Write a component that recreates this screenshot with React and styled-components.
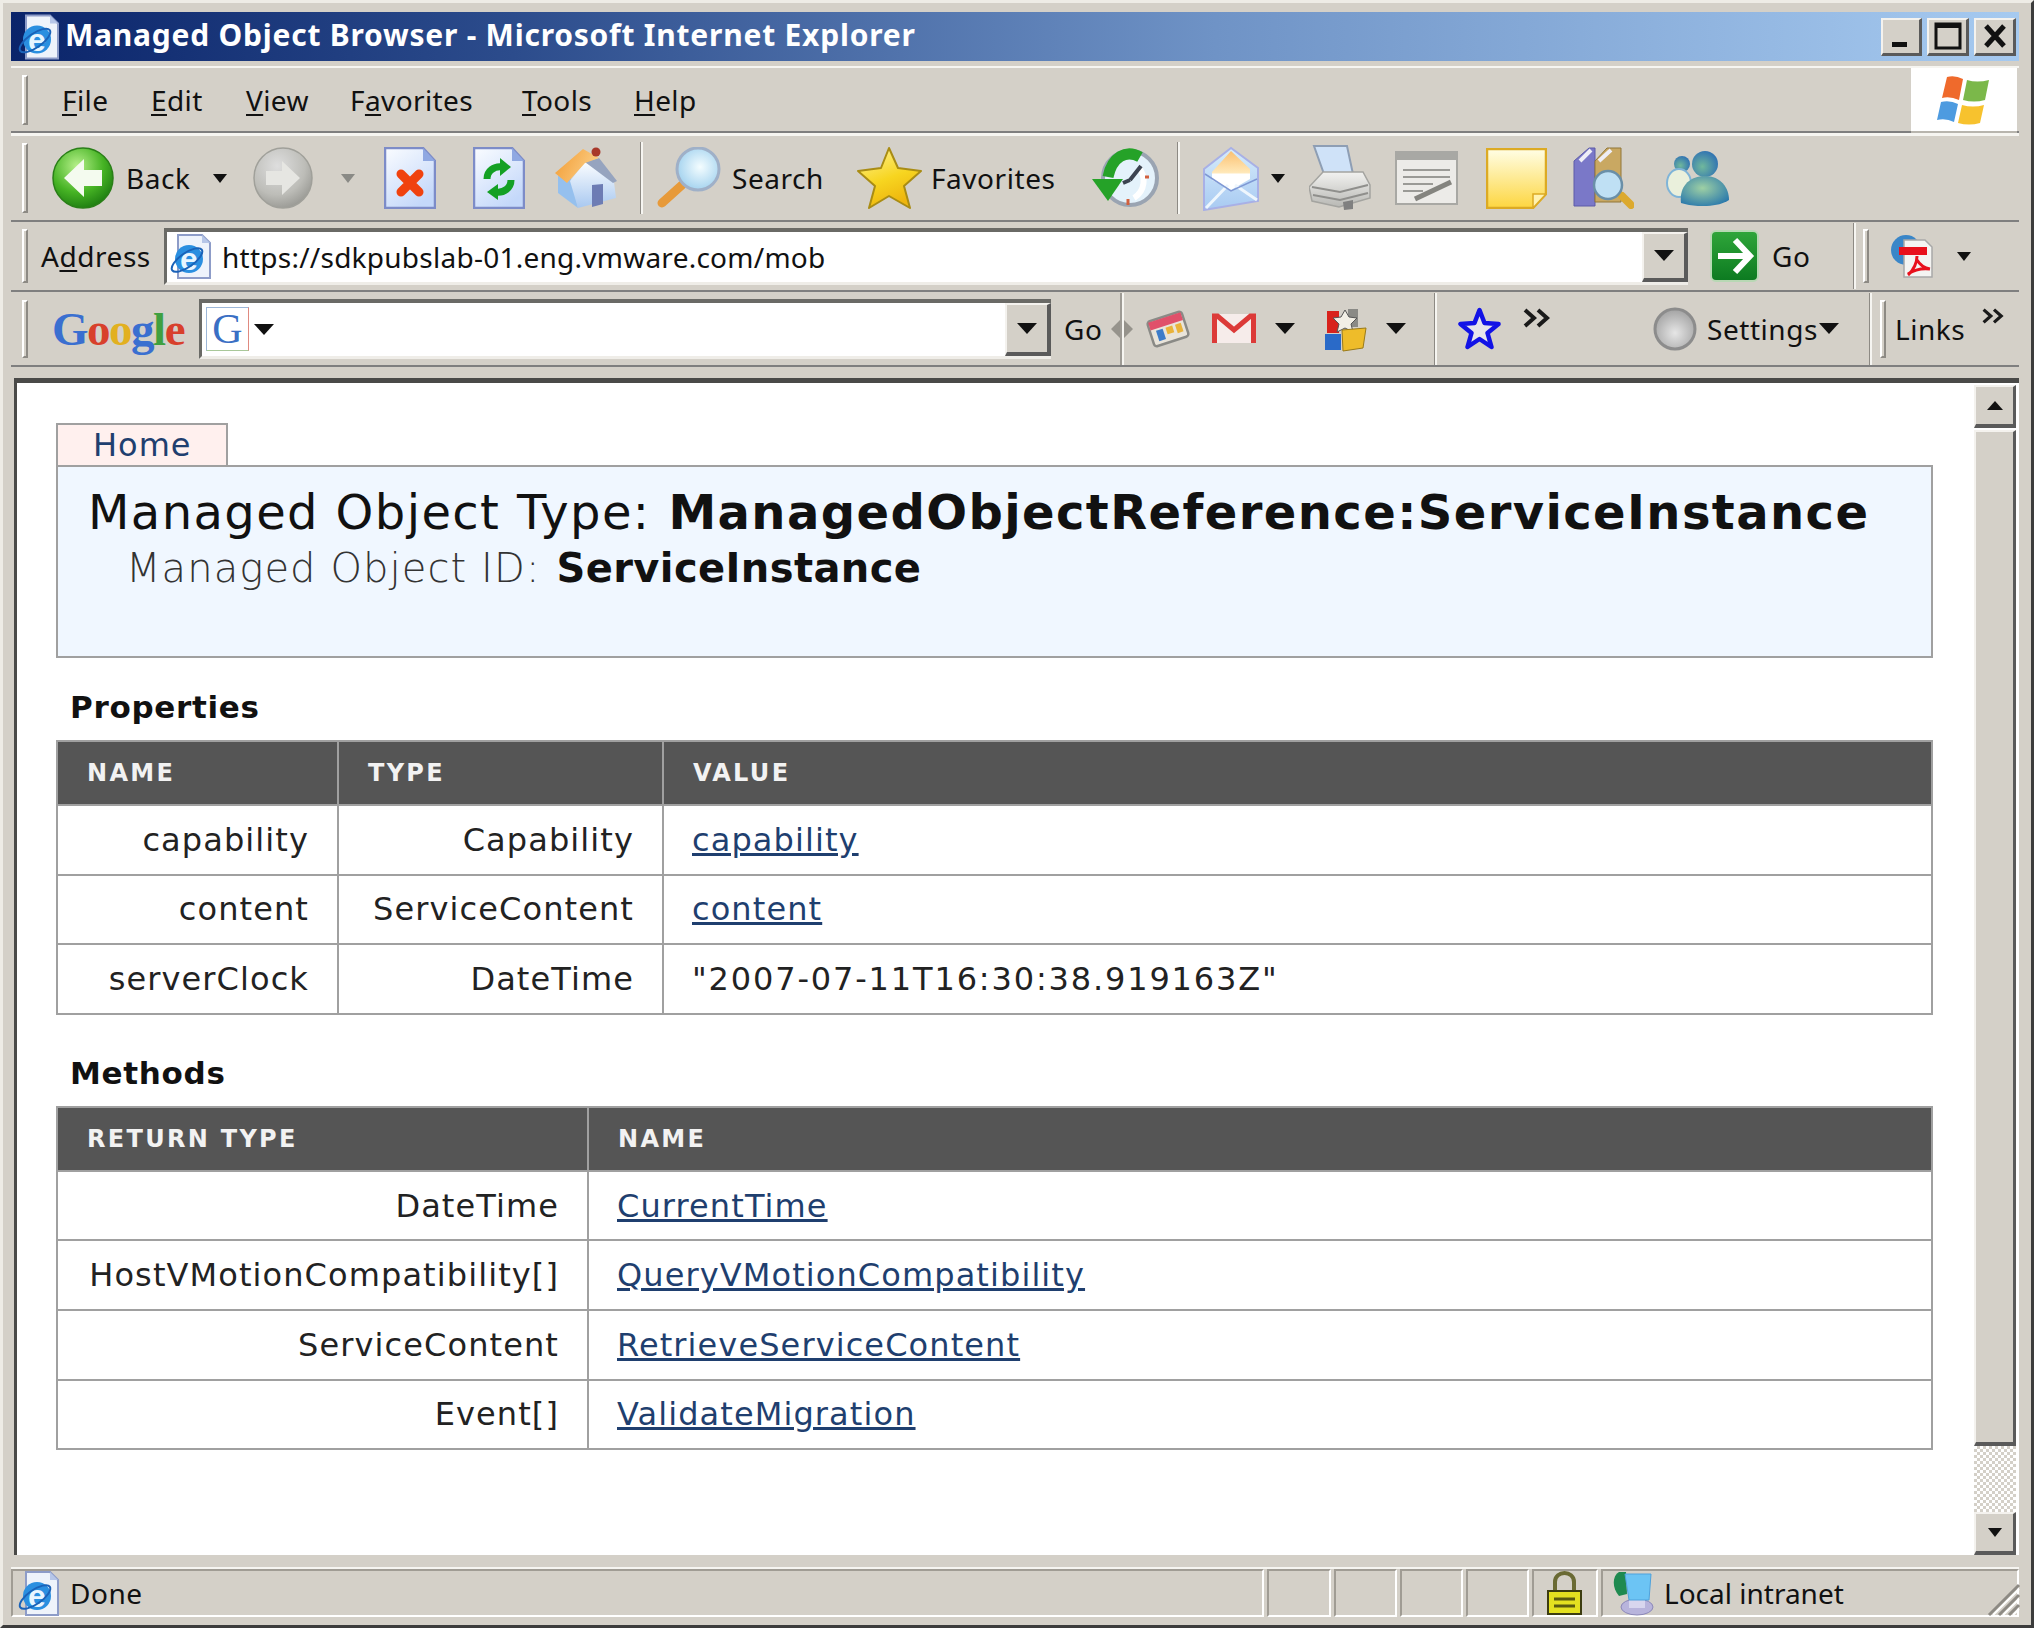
import styled, { createGlobalStyle } from "styled-components";

const GlobalStyle = createGlobalStyle`
  html, body {
    margin: 0;
    padding: 0;
    background: #d4d0c8;
  }
`;

const chromeFont = `"Noto Sans", "Open Sans", sans-serif`;
const pageFont = `"DejaVu Sans", Verdana, sans-serif`;

const Window = styled.div`
  box-sizing: border-box;
  width: 2034px;
  height: 1628px;
  display: flex;
  flex-direction: column;
  position: relative;
  overflow: hidden;
  background: #d4d0c8;
  border-style: solid;
  border-width: 3px;
  border-color: #eeece6 #3c3c3c #3c3c3c #eeece6;
  padding: 9px 12px 6px 8px;
  font-family: ${chromeFont};
  color: #111;
`;
const TitleBar = styled.div`
  flex: none;
  height: 49px;
  display: flex;
  align-items: center;
  padding: 0 3px 0 6px;
  background: linear-gradient(90deg, #0a246a 0%, #2c4c8c 25%, #6f93c6 60%, #a6caf0 100%);
`;
const TitleText = styled.div`
  flex: 1;
  margin: 0 0 4px 5px;
  color: #fff;
  font-size: 30px;
  font-weight: 700;
  letter-spacing: 0.77px;
  white-space: nowrap;
`;
const WinButtons = styled.div`
  display: flex;
  gap: 5px;
`;
const WinButton = styled.div`
  box-sizing: border-box;
  width: ${(p) => p.$w || 42}px;
  height: 38px;
  background: #d4d0c8;
  border-style: solid;
  border-width: 2px 3px 3px 2px;
  border-color: #f4f2ee #5a5a5a #5a5a5a #f4f2ee;
  display: flex;
  align-items: center;
  justify-content: center;
`;
const Bar = styled.div`
  box-sizing: border-box;
  flex: none;
  height: ${(p) => p.$h}px;
  margin-top: ${(p) => p.$mt || 0}px;
  display: flex;
  align-items: center;
  padding-left: 11px;
  border-top: ${(p) => p.$top || 0}px solid #f6f5f1;
  border-bottom: 2px solid #7f7f7f;
`;
const Handle = styled.div`
  box-sizing: border-box;
  flex: none;
  width: 6px;
  height: ${(p) => p.$h || 50}px;
  margin-left: ${(p) => p.$ml || 0}px;
  background: #d4d0c8;
  border-style: solid;
  border-width: 2px;
  border-color: #fff #8d8a84 #8d8a84 #fff;
`;
const Sep = styled.div`
  box-sizing: border-box;
  flex: none;
  width: 3px;
  height: ${(p) => p.$h || 72}px;
  margin-left: ${(p) => p.$ml || 0}px;
  border-left: 1px solid #8d8a84;
  border-right: 2px solid #f6f5f1;
`;
const MenuItem = styled.div`
  flex: none;
  width: ${(p) => p.$w}px;
  margin-left: ${(p) => p.$ml}px;
  font-size: 28px;
  letter-spacing: 0.4px;
  white-space: nowrap;
  u {
    text-underline-offset: 3px;
  }
`;
const LogoBox = styled.div`
  align-self: stretch;
  margin-left: auto;
  margin-right: 2px;
  width: 106px;
  background: #fff;
  border-bottom: 2px solid #b8b5ae;
  margin-bottom: -2px;
  display: flex;
  align-items: center;
  justify-content: center;
`;
const Label = styled.div`
  flex: none;
  width: ${(p) => p.$w}px;
  margin-left: ${(p) => p.$ml || 0}px;
  font-size: 28px;
  letter-spacing: 0.55px;
  white-space: nowrap;
  u {
    text-underline-offset: 3px;
  }
`;
const Caret = styled.div`
  flex: none;
  width: 0;
  height: 0;
  margin-left: ${(p) => p.$ml || 0}px;
  border-style: solid;
  border-width: ${(p) => (p.$big ? "11px 10px 0 10px" : "9px 7px 0 7px")};
  border-color: ${(p) => p.$color || "#111"} transparent transparent transparent;
`;
const Ico = styled.svg`
  flex: none;
  display: block;
  margin-left: ${(p) => p.$ml || 0}px;
  margin-bottom: ${(p) => p.$mb || 0}px;
`;
const Field = styled.div`
  box-sizing: border-box;
  flex: none;
  width: ${(p) => p.$w}px;
  height: ${(p) => p.$h}px;
  margin-left: ${(p) => p.$ml}px;
  display: flex;
  align-items: center;
  background: #fff;
  border-style: solid;
  border-width: 4px 0 3px 3px;
  border-color: #6a6a66 #fff #efede8 #6a6a66;
`;
const FieldText = styled.div`
  flex: 1;
  margin-left: 10px;
  font-size: 28px;
  letter-spacing: 0.25px;
  white-space: nowrap;
`;
const DropButton = styled.div`
  box-sizing: border-box;
  flex: none;
  width: 46px;
  align-self: stretch;
  margin-left: auto;
  background: #d4d0c8;
  border-style: solid;
  border-width: 2px 4px 4px 2px;
  border-color: #f4f2ee #5a5a5a #5a5a5a #f4f2ee;
  display: flex;
  align-items: center;
  justify-content: center;
`;
const GoogleLogo = styled.div`
  flex: none;
  width: 134px;
  margin-left: 24px;
  font-family: "Liberation Serif", serif;
  font-size: 47px;
  font-weight: 700;
  letter-spacing: -1.5px;
  white-space: nowrap;
`;
const Letter = styled.span`
  color: ${(p) => p.$c};
`;
const GBox = styled.div`
  box-sizing: border-box;
  flex: none;
  width: 43px;
  height: 44px;
  margin-left: 4px;
  display: flex;
  align-items: center;
  justify-content: center;
  background: #fff;
  border: 1px solid #9db7d8;
  border-right-color: #e08a80;
  border-bottom-color: #a9c89a;
  font-family: "Liberation Serif", serif;
  font-size: 42px;
  color: #3a6fc4;
`;
const Content = styled.div`
  box-sizing: border-box;
  flex: none;
  height: 1177px;
  margin: 11px 0 0 3px;
  display: flex;
  background: #fff;
  border-top: 5px solid #4a4a48;
  border-left: 3px solid #4a4a48;
`;
const Page = styled.div`
  box-sizing: border-box;
  width: 1955px;
  flex: none;
  padding: 40px 39px 0;
  font-family: ${pageFont};
`;
const Tab = styled.div`
  box-sizing: border-box;
  width: 172px;
  height: 42px;
  padding-left: 35px;
  display: flex;
  align-items: center;
  background: #fff0ee;
  border: 2px solid #a0a0a0;
  border-bottom: none;
  color: #1f3f6f;
  font-size: 32px;
  letter-spacing: 1px;
  line-height: 1;
`;
const HeaderBox = styled.div`
  box-sizing: border-box;
  height: 193px;
  padding: 17px 0 0 30px;
  background: #f0f7ff;
  border: 2px solid #a0a0a0;
`;
const TypeLine = styled.div`
  font-size: 48px;
  letter-spacing: 1.4px;
  line-height: 56px;
  white-space: nowrap;
  color: #111;
  b {
    margin-left: 18px;
  }
`;
const IdLine = styled.div`
  margin-left: 38px;
  font-size: 40px;
  letter-spacing: 1.1px;
  line-height: 56px;
  white-space: nowrap;
  color: #333;
  font-weight: 300;
  b {
    margin-left: 16px;
    color: #111;
    font-weight: 700;
    letter-spacing: 0.4px;
  }
`;
const SectionTitle = styled.h2`
  margin: ${(p) => p.$mt}px 0 10px 14px;
  height: 45px;
  font-size: 31px;
  letter-spacing: 0.7px;
  line-height: 45px;
  font-weight: 700;
  color: #111;
`;
const Grid = styled.table`
  width: 100%;
  table-layout: fixed;
  border-collapse: collapse;
  border: 2px solid #a0a0a0;
`;
const HeadCell = styled.th`
  height: 62px;
  padding: 0 0 0 29px;
  background: #555;
  border: 2px solid #a0a0a0;
  color: #f2f2f2;
  font-size: 24px;
  font-weight: 700;
  letter-spacing: 2.3px;
  text-align: left;
`;
const Cell = styled.td`
  box-sizing: border-box;
  height: 69.6px;
  padding: ${(p) => (p.$right ? "0 28px 0 0" : "0 0 0 28px")};
  border: 2px solid #a0a0a0;
  font-size: 32px;
  letter-spacing: 1.1px;
  color: #222;
  text-align: ${(p) => (p.$right ? "right" : "left")};
  white-space: nowrap;
`;
const Stamp = styled.span`
  letter-spacing: 1.85px;
`;
const Link = styled.a`
  color: #1f3f6f;
  text-decoration: underline;
`;
const ScrollBar = styled.div`
  flex: 1;
  display: flex;
  flex-direction: column;
  padding: 2px 3px 0 2px;
`;
const ScrollButton = styled.div`
  box-sizing: border-box;
  flex: none;
  height: ${(p) => p.$h}px;
  margin-top: ${(p) => p.$mt || 0}px;
  background: #d4d0c8;
  border-style: solid;
  border-width: 2px 3px 4px 2px;
  border-color: #f4f2ee #5a5a5a #5a5a5a #f4f2ee;
  display: flex;
  align-items: center;
  justify-content: center;
`;
const ScrollTrack = styled.div`
  flex: 1;
  background: repeating-conic-gradient(#d4d0c8 0 25%, #fff 0 50%) 0 0 / 6px 6px;
`;
const UpCaret = styled.div`
  width: 0;
  height: 0;
  border-style: solid;
  border-width: 0 8px 9px 8px;
  border-color: transparent transparent #111 transparent;
`;
const StatusBar = styled.div`
  flex: none;
  margin-top: 12px;
  height: 50px;
  display: flex;
  gap: 3px;
  border-top: 2px solid #f6f5f1;
`;
const StatusCell = styled.div`
  box-sizing: border-box;
  flex: ${(p) => (p.$w ? "none" : 1)};
  width: ${(p) => p.$w}px;
  height: 48px;
  display: flex;
  align-items: center;
  gap: ${(p) => p.$gap || 0}px;
  border-style: solid;
  border-width: 2px;
  border-color: #a09c94 #fff #fff #a09c94;
  font-size: 28px;
  white-space: nowrap;
`;
const Grip = styled.svg`
  position: absolute;
  right: 10px;
  bottom: 8px;
`;

const BackIcon = (p) => (
  <Ico width="62" height="62" viewBox="0 0 62 62" {...p}>
    <defs>
      <radialGradient id="bk" cx="0.4" cy="0.3" r="0.8">
        <stop offset="0" stopColor="#b6f08a" />
        <stop offset="0.55" stopColor="#46b324" />
        <stop offset="1" stopColor="#14700c" />
      </radialGradient>
    </defs>
    <circle cx="31" cy="31" r="30" fill="url(#bk)" stroke="#2a7f18" strokeWidth="1.5" />
    <path d="M32 12L12 31l20 19V39h18V23H32z" fill="#f4fbef" />
  </Ico>
);
const ForwardIcon = (p) => (
  <Ico width="60" height="62" viewBox="0 0 60 62" {...p}>
    <defs>
      <radialGradient id="fw" cx="0.4" cy="0.3" r="0.8">
        <stop offset="0" stopColor="#dedede" />
        <stop offset="0.6" stopColor="#bdbdb8" />
        <stop offset="1" stopColor="#8f8f8a" />
      </radialGradient>
    </defs>
    <ellipse cx="30" cy="31" rx="29" ry="30" fill="url(#fw)" stroke="#a0a09a" strokeWidth="1.5" />
    <path d="M29 14l18 17-18 17V38H13V24h16z" fill="#e6e6e2" />
  </Ico>
);
const PageShape = ({ id }) => (
  <>
    <defs>
      <linearGradient id={id} x1="0" y1="0" x2="0.6" y2="1">
        <stop offset="0" stopColor="#fafcff" />
        <stop offset="1" stopColor="#c4d8fa" />
      </linearGradient>
    </defs>
    <path d="M1 1h38l12 13v47H1z" fill={`url(#${id})`} stroke="#7d8cc8" strokeWidth="2.500" />
    <path d="M39 1v13h12z" fill="#8fa8e2" />
  </>
);
const StopIcon = (p) => (
  <Ico width="52" height="62" viewBox="0 0 52 62" {...p}>
    <PageShape id="stp" />
    <path d="M17 27l18 18M35 27L17 45" stroke="#f0420f" strokeWidth="9" strokeLinecap="round" />
  </Ico>
);
const RefreshIcon = (p) => (
  <Ico width="52" height="62" viewBox="0 0 52 62" {...p}>
    <PageShape id="rfr" />
    <path d="M14 32c0-8 7-13 15-12" fill="none" stroke="#14a024" strokeWidth="7" />
    <path d="M27 11l11 9-11 9z" fill="#14a024" />
    <path d="M38 33c0 8-7 13-15 12" fill="none" stroke="#14a024" strokeWidth="7" />
    <path d="M25 53l-11-8 11-8z" fill="#14a024" />
  </Ico>
);
const HomeIcon = (p) => (
  <Ico width="63" height="64" viewBox="0 0 63 64" {...p}>
    <defs>
      <linearGradient id="hw" x1="0" y1="0" x2="0" y2="1">
        <stop offset="0" stopColor="#fbfdff" />
        <stop offset="1" stopColor="#a8c8f0" />
      </linearGradient>
      <linearGradient id="hr" x1="0" y1="0" x2="1" y2="0.4">
        <stop offset="0" stopColor="#f29a30" />
        <stop offset="1" stopColor="#fbcd84" />
      </linearGradient>
    </defs>
    <path d="M3 30l13 2 7 30L3 47z" fill="#95c0ee" />
    <path d="M15 35l15-19 29 20 2 16-38 10z" fill="url(#hw)" />
    <path d="M44 12l18 23-4 2-28-21z" fill="#96a4bf" />
    <path d="M0 27L28 3l16 9-14 5-18 20z" fill="url(#hr)" />
    <circle cx="41" cy="6" r="4.500" fill="#a8382a" />
    <path d="M37 39l11-1v20l-11 3z" fill="#6d7cb4" />
  </Ico>
);
const SearchIcon = (p) => (
  <Ico width="66" height="62" viewBox="0 0 66 62" {...p}>
    <defs>
      <radialGradient id="lens" cx="0.55" cy="0.45" r="0.6">
        <stop offset="0" stopColor="#f4fdff" />
        <stop offset="1" stopColor="#9fd0ee" />
      </radialGradient>
    </defs>
    <path d="M27 38L7 56" stroke="#e79a3a" strokeWidth="9" strokeLinecap="round" />
    <ellipse cx="43" cy="22" rx="21" ry="21" fill="url(#lens)" stroke="#9fb0c8" strokeWidth="3" />
  </Ico>
);
const StarIcon = (p) => (
  <Ico width="67" height="64" viewBox="0 0 67 64" {...p}>
    <defs>
      <linearGradient id="st" x1="0" y1="0" x2="0.4" y2="1">
        <stop offset="0" stopColor="#fff39a" />
        <stop offset="0.6" stopColor="#f7d520" />
        <stop offset="1" stopColor="#eeb60e" />
      </linearGradient>
    </defs>
    <path d="M33 2l9 20 23 3-17 15 6 22-21-12-20 12 6-22L2 25l23-3z" fill="url(#st)" stroke="#a98c14" strokeWidth="2" strokeLinejoin="round" />
  </Ico>
);
const HistoryIcon = (p) => (
  <Ico width="67" height="62" viewBox="0 0 67 62" {...p}>
    <circle cx="38" cy="31" r="27" fill="#e4f2fb" stroke="#9aa4b2" strokeWidth="4" />
    <path d="M46 20a20 20 0 0 1-4 31" fill="none" stroke="#fff" strokeWidth="6" />
    <path d="M38 33l11-14M38 33l-7 3" stroke="#3b4350" strokeWidth="4" />
    <path d="M36 52v6M57 30h-4" stroke="#d2603e" strokeWidth="3" />
    <path d="M48 10C34 2 20 10 16 30" fill="none" stroke="#25a228" strokeWidth="11" />
    <path d="M0 32h31L16 54z" fill="#25a228" />
  </Ico>
);
const MailIcon = (p) => (
  <Ico width="56" height="65" viewBox="0 0 56 65" {...p}>
    <defs>
      <linearGradient id="mb" x1="0" y1="0" x2="0" y2="1">
        <stop offset="0" stopColor="#d6ecfb" />
        <stop offset="1" stopColor="#a8caf2" />
      </linearGradient>
      <linearGradient id="ml" x1="0" y1="0" x2="0" y2="1">
        <stop offset="0" stopColor="#fbc070" />
        <stop offset="0.55" stopColor="#ffe8b8" />
        <stop offset="0.6" stopColor="#fff" />
      </linearGradient>
    </defs>
    <path d="M1 23L28 2l27 20v33L1 64z" fill="url(#mb)" stroke="#a8b0e6" strokeWidth="2" />
    <path d="M9 26L28 5l19 18v10L28 44 9 34z" fill="url(#ml)" />
    <path d="M3 62l22-23M54 54L32 39" fill="none" stroke="#eef6fd" strokeWidth="3" />
    <path d="M2 28l26 17 26-12" fill="none" stroke="#7f98d4" strokeWidth="1.500" />
  </Ico>
);
const PrinterIcon = (p) => (
  <Ico width="62" height="66" viewBox="0 0 62 66" {...p}>
    <defs>
      <linearGradient id="pr" x1="0" y1="0" x2="0" y2="1">
        <stop offset="0" stopColor="#f2f2f0" />
        <stop offset="1" stopColor="#b8b8b4" />
      </linearGradient>
    </defs>
    <path d="M5 1h33l6 28H15z" fill="#cfe2f8" stroke="#8e9eb4" strokeWidth="2" />
    <path d="M0 42l14-15h40l7 13v13L30 62 3 56z" fill="url(#pr)" stroke="#a4a4a0" strokeWidth="1.500" />
    <path d="M3 42l28 5 28-7M4 50l27 5 28-7" fill="none" stroke="#8f8f8c" strokeWidth="2" />
    <path d="M34 57l10-2v9l-9 1z" fill="#808080" />
  </Ico>
);
const EditIcon = (p) => (
  <Ico width="63" height="54" viewBox="0 0 63 54" {...p}>
    <rect x="1" y="1" width="61" height="52" fill="#ecebe8" stroke="#a8a8a4" strokeWidth="2" />
    <rect x="1" y="1" width="61" height="8" fill="#a8a8a4" />
    <path d="M8 19h47M8 26h47M8 33h30M8 40h20" stroke="#9a9a96" strokeWidth="2" />
    <path d="M20 48l36-17" stroke="#84847f" strokeWidth="5" />
  </Ico>
);
const NoteIcon = (p) => (
  <Ico width="61" height="61" viewBox="0 0 61 61" {...p}>
    <defs>
      <linearGradient id="nt" x1="0" y1="0" x2="0" y2="1">
        <stop offset="0" stopColor="#fffee6" />
        <stop offset="1" stopColor="#fdd640" />
      </linearGradient>
    </defs>
    <path d="M1 1h59v45L47 60H1z" fill="url(#nt)" stroke="#dcaa24" strokeWidth="2.500" />
    <path d="M60 46H47v14z" fill="#fff2b0" stroke="#dcaa24" strokeWidth="1.500" />
  </Ico>
);
const ResearchIcon = (p) => (
  <Ico width="61" height="62" viewBox="0 0 61 62" {...p}>
    <path d="M1 14L16 1h6v58H1z" fill="#7a78c8" stroke="#5c5aa8" />
    <path d="M22 14L34 1h14v54H22z" fill="#c9a862" stroke="#917738" />
    <path d="M7 14L18 3M26 14L38 3" stroke="#eeeef6" strokeWidth="4" />
    <path d="M49 49l9 9" stroke="#dca92e" strokeWidth="8" strokeLinecap="round" />
    <circle cx="35" cy="38" r="14" fill="#bfe0f4" stroke="#6a8fa8" strokeWidth="2.500" />
  </Ico>
);
const MessengerIcon = (p) => (
  <Ico width="65" height="56" viewBox="0 0 65 56" {...p}>
    <defs>
      <radialGradient id="ms" cx="0.45" cy="0.4" r="0.7">
        <stop offset="0" stopColor="#9ed0a4" />
        <stop offset="1" stopColor="#2474ac" />
      </radialGradient>
      <radialGradient id="mh" cx="0.4" cy="0.6" r="0.7">
        <stop offset="0" stopColor="#70b89c" />
        <stop offset="1" stopColor="#2a6cb4" />
      </radialGradient>
    </defs>
    <circle cx="18" cy="14" r="8" fill="url(#mh)" />
    <ellipse cx="15" cy="33" rx="12" ry="14" fill="#eaf0dc" stroke="#7fb4d8" strokeWidth="2" />
    <circle cx="41" cy="14" r="13" fill="url(#mh)" />
    <path d="M17 53c-2-16 8-27 24-27s24 12 24 24c-10 7-33 8-48 3z" fill="url(#ms)" />
  </Ico>
);
const WindowsLogo = () => (
  <Ico width="54" height="50" viewBox="0 0 54 50">
    <path d="M10 2q8-2 16 2l-4 21q-9-4-17-2z" fill="#ef6a2c" />
    <path d="M30 5q10 3 22 0l-4 20q-11 3-22 0z" fill="#7bb84a" />
    <path d="M4 27q9-2 17 2l-4 18q-8-4-17-2z" fill="#4d9be0" />
    <path d="M25 30q11 3 22 0l-4 18q-11 3-22 0z" fill="#f7c22e" />
  </Ico>
);
const IEPage = ({ w = 43, h = 45, ...p }) => (
  <Ico width={w} height={h} viewBox="0 0 43 45" {...p}>
    <path d="M9 1h24l8 8v35H9z" fill="#eef3fb" stroke="#8d9cc8" strokeWidth="2" />
    <path d="M33 1v8h8z" fill="#b6c6e8" />
    <circle cx="20" cy="25" r="14" fill="#2a8fe0" />
    <text x="20" y="36" textAnchor="middle" fontFamily="Liberation Sans, sans-serif" fontWeight="700" fontSize="32" fill="#e8f6ff">e</text>
    <ellipse cx="18" cy="26" rx="18" ry="7" transform="rotate(-35 18 26)" fill="none" stroke="#1a62b8" strokeWidth="2" />
  </Ico>
);
const GoIcon = (p) => (
  <Ico width="49" height="52" viewBox="0 0 49 52" {...p}>
    <defs>
      <linearGradient id="go" x1="0" y1="0" x2="0" y2="1">
        <stop offset="0" stopColor="#2fa63a" />
        <stop offset="1" stopColor="#0c7a20" />
      </linearGradient>
    </defs>
    <rect x="1" y="1" width="47" height="50" rx="5" fill="url(#go)" stroke="#b8d8b4" strokeWidth="2" />
    <path d="M25 10l15 16-15 16M8 26h30" fill="none" stroke="#fff" strokeWidth="6" />
  </Ico>
);
const PdfIcon = (p) => (
  <Ico width="43" height="44" viewBox="0 0 43 44" {...p}>
    <circle cx="16" cy="16" r="15" fill="#3a86c8" />
    <path d="M14 6h21l7 7v30H14z" fill="#f4f4f2" stroke="#a8a8a8" strokeWidth="1.500" />
    <rect x="9" y="13" width="28" height="8" fill="#e8101c" />
    <path d="M18 41c6-5 9-13 9-19M27 26c3 5 7 8 13 9M18 40c6-4 14-6 22-5" fill="none" stroke="#e8101c" strokeWidth="3" />
  </Ico>
);
const GrabSep = (p) => (
  <Ico width="24" height="72" viewBox="0 0 24 72" {...p}>
    <path d="M1 36l9-9v18zM23 36l-9-9v18z" fill="#96938c" />
    <path d="M11 0v72" stroke="#8d8a84" strokeWidth="1.500" />
    <path d="M13 0v72" stroke="#f6f5f1" strokeWidth="2" />
  </Ico>
);
const CalendarIcon = (p) => (
  <Ico width="44" height="42" viewBox="0 0 44 42" {...p}>
    <g transform="rotate(-18 22 21)">
      <rect x="4" y="8" width="36" height="26" rx="3" fill="#e9e4da" stroke="#8a8a86" strokeWidth="2.500" />
      <rect x="5" y="9" width="34" height="8" fill="#e0506a" />
      <rect x="10" y="19" width="7" height="11" fill="#3d7cc9" />
      <rect x="20" y="19" width="7" height="7" fill="#eab33a" />
      <rect x="30" y="19" width="6" height="9" fill="#eab33a" />
    </g>
  </Ico>
);
const GmailIcon = (p) => (
  <Ico width="46" height="31" viewBox="0 0 46 31" {...p}>
    <rect x="1" y="1" width="44" height="29" fill="#f6ecea" />
    <path d="M3.500 30V3h3l16.500 14L39.500 3h3v27" fill="none" stroke="#dc3a38" strokeWidth="5" />
  </Ico>
);
const BoxIcon = (p) => (
  <Ico width="43" height="46" viewBox="0 0 43 46" {...p}>
    <rect x="3" y="5" width="12" height="22" fill="#d8221c" />
    <rect x="24" y="3" width="10" height="18" fill="#8a8a86" />
    <path d="M21 4l4 7 8 1-6 6 2 8-8-4-8 4 2-8-6-6 8-1z" fill="#f2efe6" stroke="#555" />
    <rect x="1" y="28" width="16" height="16" fill="#2a6ac8" />
    <path d="M18 24l24-2-3 20-20 3z" fill="#eebc2a" stroke="#9a7a18" />
  </Ico>
);
const BlueStar = (p) => (
  <Ico width="43" height="43" viewBox="0 0 43 43" {...p}>
    <path d="M21.500 3l5 13 14 1-11 9 4 14-12-8-12 8 4-14-11-9 14-1z" fill="#e6e4ea" stroke="#1212e6" strokeWidth="4.500" strokeLinejoin="round" />
  </Ico>
);
const Chevrons = ({ w = 30, h = 20, ...p }) => (
  <Ico width={w} height={h} viewBox="0 0 30 20" {...p}>
    <path d="M2 2l9 8-9 8M15 2l9 8-9 8" fill="none" stroke="#1a1a1a" strokeWidth="4" />
  </Ico>
);
const SettingsBall = (p) => (
  <Ico width="44" height="44" viewBox="0 0 44 44" {...p}>
    <defs>
      <radialGradient id="ball" cx="0.5" cy="0.6" r="0.55">
        <stop offset="0" stopColor="#e6e6e6" />
        <stop offset="1" stopColor="#a8a8a8" />
      </radialGradient>
    </defs>
    <circle cx="22" cy="22" r="20" fill="url(#ball)" stroke="#8c8c8c" strokeWidth="3" />
  </Ico>
);
const LockIcon = (p) => (
  <Ico width="37" height="44" viewBox="0 0 37 44" {...p}>
    <path d="M9 22V11c0-12 19-12 19 0v11" fill="none" stroke="#6a6a34" strokeWidth="4" />
    <rect x="2" y="20" width="33" height="23" fill="#e4e020" stroke="#3c3c10" strokeWidth="2" />
    <path d="M8 28h21M8 35h21" stroke="#5a5a10" strokeWidth="3" />
  </Ico>
);
const ZoneIcon = (p) => (
  <Ico width="46" height="46" viewBox="0 0 46 46" {...p}>
    <ellipse cx="26" cy="37" rx="16" ry="8" fill="#b8b4dc" stroke="#8c88b8" />
    <rect x="18" y="24" width="16" height="14" fill="#d8d6ee" />
    <path d="M8 2C1 6 1 18 8 26l8-2-1-22z" fill="#1f8a50" />
    <path d="M14 4h26l-2 26H18z" fill="#6cc4f4" stroke="#4fa2dc" />
  </Ico>
);

const Home = () => (
  <Page>
    <Tab>Home</Tab>
    <HeaderBox>
      <TypeLine>
        Managed Object Type:<b>ManagedObjectReference:ServiceInstance</b>
      </TypeLine>
      <IdLine>
        Managed Object ID:<b>ServiceInstance</b>
      </IdLine>
    </HeaderBox>
    <SectionTitle $mt={27}>Properties</SectionTitle>
    <Grid>
      <colgroup>
        <col style={{ width: 281 }} />
        <col style={{ width: 325 }} />
        <col />
      </colgroup>
      <thead>
        <tr>
          <HeadCell>NAME</HeadCell>
          <HeadCell>TYPE</HeadCell>
          <HeadCell>VALUE</HeadCell>
        </tr>
      </thead>
      <tbody>
        <tr>
          <Cell $right>capability</Cell>
          <Cell $right>Capability</Cell>
          <Cell><Link>capability</Link></Cell>
        </tr>
        <tr>
          <Cell $right>content</Cell>
          <Cell $right>ServiceContent</Cell>
          <Cell><Link>content</Link></Cell>
        </tr>
        <tr>
          <Cell $right>serverClock</Cell>
          <Cell $right>DateTime</Cell>
          <Cell><Stamp>"2007-07-11T16:30:38.919163Z"</Stamp></Cell>
        </tr>
      </tbody>
    </Grid>
    <SectionTitle $mt={36}>Methods</SectionTitle>
    <Grid>
      <colgroup>
        <col style={{ width: 531 }} />
        <col />
      </colgroup>
      <thead>
        <tr>
          <HeadCell>RETURN TYPE</HeadCell>
          <HeadCell>NAME</HeadCell>
        </tr>
      </thead>
      <tbody>
        <tr>
          <Cell $right>DateTime</Cell>
          <Cell><Link>CurrentTime</Link></Cell>
        </tr>
        <tr>
          <Cell $right>HostVMotionCompatibility[]</Cell>
          <Cell><Link>QueryVMotionCompatibility</Link></Cell>
        </tr>
        <tr>
          <Cell $right>ServiceContent</Cell>
          <Cell><Link>RetrieveServiceContent</Link></Cell>
        </tr>
        <tr>
          <Cell $right>Event[]</Cell>
          <Cell><Link>ValidateMigration</Link></Cell>
        </tr>
      </tbody>
    </Grid>
  </Page>
);

export default function App() {
  return (
    <Window>
      <GlobalStyle />
      <TitleBar>
        <IEPage w={43} h={46} />
        <TitleText>Managed Object Browser - Microsoft Internet Explorer</TitleText>
        <WinButtons>
          <WinButton $w={41}>
            <Ico width="26" height="26" viewBox="0 0 26 26">
              <rect x="4" y="19" width="15" height="5" fill="#111" />
            </Ico>
          </WinButton>
          <WinButton>
            <Ico width="28" height="28" viewBox="0 0 28 28">
              <path d="M2 2h24v24H2z" fill="none" stroke="#111" strokeWidth="3" />
              <path d="M2 4h24" stroke="#111" strokeWidth="4" />
            </Ico>
          </WinButton>
          <WinButton>
            <Ico width="26" height="26" viewBox="0 0 26 26">
              <path d="M4 3l18 20M22 3L4 23" stroke="#111" strokeWidth="5" />
            </Ico>
          </WinButton>
        </WinButtons>
      </TitleBar>

      <Bar $h={67} $mt={5} $top={2}>
        <Handle />
        <MenuItem $ml={34} $w={43}><u>F</u>ile</MenuItem>
        <MenuItem $ml={46} $w={48}><u>E</u>dit</MenuItem>
        <MenuItem $ml={47} $w={59}><u>V</u>iew</MenuItem>
        <MenuItem $ml={45} $w={125}>F<u>a</u>vorites</MenuItem>
        <MenuItem $ml={47} $w={67}><u>T</u>ools</MenuItem>
        <MenuItem $ml={45} $w={58}><u>H</u>elp</MenuItem>
        <LogoBox><WindowsLogo /></LogoBox>
      </Bar>

      <Bar $h={89} $top={3}>
        <Handle $h={70} />
        <BackIcon $ml={24} />
        <Label $ml={12} $w={63}>Back</Label>
        <Caret $ml={24} />
        <ForwardIcon $ml={26} />
        <Caret $ml={28} $color="#8a8a86" />
        <StopIcon $ml={29} />
        <RefreshIcon $ml={37} />
        <HomeIcon $ml={30} />
        <Sep $ml={22} />
        <SearchIcon $ml={12} />
        <Label $ml={11} $w={91}>Search</Label>
        <StarIcon $ml={33} />
        <Label $ml={8} $w={126}>Favorites</Label>
        <HistoryIcon $ml={35} />
        <Sep $ml={18} />
        <MailIcon $ml={23} />
        <Caret $ml={12} />
        <PrinterIcon $ml={24} />
        <EditIcon $ml={24} />
        <NoteIcon $ml={28} />
        <ResearchIcon $ml={26} />
        <MessengerIcon $ml={30} />
      </Bar>

      <Bar $h={70}>
        <Handle $h={54} />
        <Label $ml={13} $w={106}>A<u>d</u>dress</Label>
        <Field $ml={17} $w={1524} $h={57}>
          <IEPage $ml={2} />
          <FieldText>https://sdkpubslab-01.eng.vmware.com/mob</FieldText>
          <DropButton><Caret $big /></DropButton>
        </Field>
        <GoIcon $ml={22} />
        <Label $ml={13} $w={35}>Go</Label>
        <Sep $ml={46} $h={66} />
        <Handle $ml={7} $h={54} />
        <PdfIcon $ml={21} />
        <Caret $ml={24} />
      </Bar>

      <Bar $h={75}>
        <Handle $h={58} />
        <GoogleLogo>
          <Letter $c="#3a6fd0">G</Letter>
          <Letter $c="#d8402c">o</Letter>
          <Letter $c="#e2b020">o</Letter>
          <Letter $c="#3a6fd0">g</Letter>
          <Letter $c="#3fa040">l</Letter>
          <Letter $c="#d8402c">e</Letter>
        </GoogleLogo>
        <Field $ml={13} $w={852} $h={60}>
          <GBox>G</GBox>
          <Caret $ml={5} $big />
          <DropButton><Caret $big /></DropButton>
        </Field>
        <Label $ml={13} $w={34}>Go</Label>
        <GrabSep $ml={12} />
        <CalendarIcon $ml={12} />
        <GmailIcon $ml={21} />
        <Caret $ml={18} $big />
        <BoxIcon $ml={29} />
        <Caret $ml={19} $big />
        <Sep $ml={28} />
        <BlueStar $ml={21} />
        <Chevrons $ml={22} $mb={22} />
        <SettingsBall $ml={100} />
        <Label $ml={10} $w={109}>Settings</Label>
        <Caret $ml={3} $big />
        <Sep $ml={30} />
        <Handle $ml={8} $h={58} />
        <Label $ml={9} $w={63}>Links</Label>
        <Chevrons $ml={24} $mb={26} w={24} h={16} />
      </Bar>

      <Content>
        <Home />
        <ScrollBar>
          <ScrollButton $h={43}><UpCaret /></ScrollButton>
          <ScrollButton $h={1016} $mt={2} />
          <ScrollTrack />
          <ScrollButton $h={43}><Caret /></ScrollButton>
        </ScrollBar>
      </Content>

      <StatusBar>
        <StatusCell>
          <IEPage $ml={4} />
          <Label $ml={10} $w={70}>Done</Label>
        </StatusCell>
        <StatusCell $w={64} />
        <StatusCell $w={63} />
        <StatusCell $w={63} />
        <StatusCell $w={63} />
        <StatusCell $w={66}>
          <LockIcon $ml={12} />
        </StatusCell>
        <StatusCell $w={418} $gap={7}>
          <ZoneIcon $ml={8} />
          Local intranet
        </StatusCell>
      </StatusBar>
      <Grip width="36" height="36" viewBox="0 0 36 36">
        <path d="M34 4L4 34M34 14L14 34M34 24L24 34" stroke="#8d8a84" strokeWidth="3" />
        <path d="M34 8L8 34M34 18L18 34M34 28L28 34" stroke="#fff" strokeWidth="2" />
      </Grip>
    </Window>
  );
}
